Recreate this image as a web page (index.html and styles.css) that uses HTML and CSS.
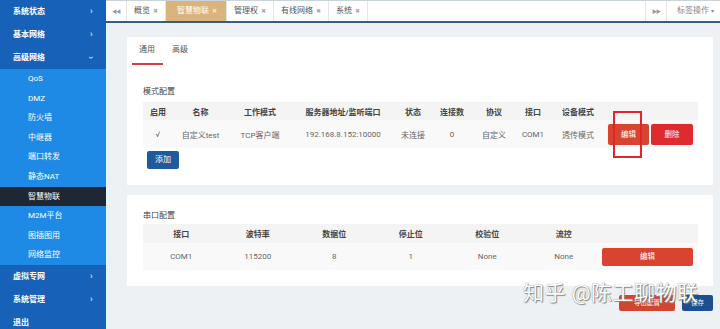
FILE: index.html
```html
<!DOCTYPE html>
<html>
<head>
<meta charset="utf-8" />
<title>智慧物联</title>
<link rel="stylesheet" href="styles.css">
</head>
<body>

<aside class="sidebar">
	<div class="nav-item">系统状态<span class="caret">&#8250;</span></div>
	<div class="nav-item">基本网络<span class="caret">&#8250;</span></div>
	<div class="nav-item">高级网络<span class="caret down">&#8250;</span></div>
	<ul class="sub">
		<li>QoS</li>
		<li>DMZ</li>
		<li>防火墙</li>
		<li>中继器</li>
		<li>端口转发</li>
		<li>静态NAT</li>
		<li class="active">智慧物联</li>
		<li>M2M平台</li>
		<li>图插图用</li>
		<li>网络监控</li>
	</ul>
	<div class="nav-item">虚拟专网<span class="caret">&#8250;</span></div>
	<div class="nav-item">系统管理<span class="caret">&#8250;</span></div>
	<div class="nav-item">退出</div>
</aside>

<div class="main">
	<div class="tabbar">
		<span class="tab-arrow">&#9664;&#9664;</span>
		<span class="tab">概览 <i>&#10006;</i></span>
		<span class="tab current">智慧物联 <i>&#10006;</i></span>
		<span class="tab">管理权 <i>&#10006;</i></span>
		<span class="tab">有线网络 <i>&#10006;</i></span>
		<span class="tab">系统 <i>&#10006;</i></span>
		<span class="tab-fill"></span>
		<span class="tab-arrow right">&#9654;&#9654;</span>
		<span class="tab-menu">标签操作 <b>&#9662;</b></span>
	</div>

	<div class="content">
		<div class="card first">
			<div class="subnav">
				<span class="on">通用</span>
				<span>高级</span>
			</div>
			<div class="section-title">模式配置</div>
			<table class="grid mode">
				<colgroup>
					<col style="width:30px"><col style="width:55px"><col style="width:64px">
					<col style="width:102px"><col style="width:38px"><col style="width:40px">
					<col style="width:44px"><col style="width:34px"><col style="width:56px">
					<col style="width:92px">
				</colgroup>
				<tr class="head">
					<th>启用</th><th>名称</th><th>工作模式</th><th>服务器地址/监听端口</th>
					<th>状态</th><th>连接数</th><th>协议</th><th>接口</th><th>设备模式</th><th></th>
				</tr>
				<tr class="row">
					<td>&#8730;</td><td>自定义test</td><td>TCP客户端</td><td>192.168.8.152:10000</td>
					<td>未连接</td><td>0</td><td>自定义</td><td>COM1</td><td>透传模式</td>
					<td class="ops">
						<span class="btn red">编辑</span><span class="btn crimson">删除</span>
						<span class="mark"></span>
					</td>
				</tr>
			</table>
			<span class="btn blue add">添加</span>
		</div>

		<div class="card second">
			<div class="section-title">串口配置</div>
			<table class="grid serial">
				<colgroup>
					<col style="width:76.5px"><col style="width:76.5px"><col style="width:76.5px">
					<col style="width:76.5px"><col style="width:76.5px"><col style="width:76.5px">
					<col style="width:96px">
				</colgroup>
				<tr class="head">
					<th>接口</th><th>波特率</th><th>数据位</th><th>停止位</th><th>校验位</th><th>流控</th><th></th>
				</tr>
				<tr class="row">
					<td>COM1</td><td>115200</td><td>8</td><td>1</td><td>None</td><td>None</td>
					<td class="ops"><span class="btn red wide">编辑</span></td>
				</tr>
			</table>
		</div>

		<div class="footer-btns">
			<span class="btn red export">导出配置</span>
			<span class="btn blue save">保存</span>
		</div>
	</div>
</div>

<div class="watermark">知乎 @陈工聊物联</div>

</body>
</html>
```

FILE: styles.css
```css
body {
	margin: 0;
	display: flex;
	height: 329px;
	overflow: hidden;
	font-family: Roboto, "Noto Sans CJK SC", sans-serif;
	font-size: 8px;
	color: #555;
	background: #eef1f3;
}

/* left menu */
.sidebar {
	width: 106px;
	flex: none;
	background: #1762b8;
	color: #fff;
}
.nav-item {
	height: 23px;
	line-height: 23px;
	padding-left: 13px;
	font-weight: bold;
	position: relative;
}
.caret {
	position: absolute;
	left: 90px;
	top: 0;
	font-size: 9px;
	color: #cfe0f5;
}
.caret.down {
	transform: rotate(90deg);
	left: 89px;
}
.sub {
	list-style: none;
	margin: 0;
	padding: 0;
	background: #1f8ae6;
}
.sub li {
	height: 19.6px;
	line-height: 19.6px;
	padding-left: 28px;
}
.sub li.active {
	background: #1e2733;
}

/* right side */
.main {
	flex: 1;
	display: flex;
	flex-direction: column;
	border-left: 3px solid #e6f6f8;
}
.tabbar {
	height: 20px;
	display: flex;
	align-items: stretch;
	background: #fff;
	border-top: 1px solid #c9d3d8;
	border-bottom: 2px solid #2f6180;
	line-height: 20px;
	color: #555;
	margin-left: -3px;
}
.tab-arrow {
	width: 20px;
	text-align: center;
	font-size: 5px;
	color: #999;
	border-right: 1px solid #e4e4e4;
	letter-spacing: -1px;
}
.tab-arrow.right {
	border-left: 1px solid #e4e4e4;
	border-right: 1px solid #e4e4e4;
}
.tab {
	padding: 0 7px;
	border-right: 1px solid #e4e4e4;
	white-space: nowrap;
}
.tab i {
	font-style: normal;
	font-size: 5.5px;
	color: #aaa;
	margin-left: 1px;
}
.tab.current {
	background: #dbb47b;
	color: #fff;
	padding: 0 9px 0 11px;
}
.tab.current i {
	color: #f3e3c8;
}
.tab-fill {
	flex: 1;
}
.tab-menu {
	padding-left: 10px;
	width: 43px;
	color: #888;
	white-space: nowrap;
}
.tab-menu b {
	font-weight: normal;
	font-size: 6px;
}

.content {
	flex: 1;
	padding: 14px 7px 0 18px;
	position: relative;
}
.card {
	background: #fff;
	padding: 0 15px 16px 16px;
}
.card.first {
	height: 148px;
	box-sizing: border-box;
}
.card.second {
	margin-top: 10px;
	height: 91px;
	box-sizing: border-box;
	padding-top: 16px;
}
.subnav {
	display: flex;
	gap: 2px;
	margin-left: -11px;
}
.subnav span {
	padding: 8px 7px;
	line-height: 10px;
	border-bottom: 2px solid transparent;
	color: #555;
}
.subnav span.on {
	border-bottom-color: #d8403a;
	padding: 8px 8px 8px 7px;
}
.section-title {
	line-height: 10px;
	color: #444;
	margin-top: 22px;
}
.card.second .section-title {
	margin-top: 0;
}

.grid {
	border-collapse: collapse;
	table-layout: fixed;
	width: 555px;
	margin-top: 5px;
	text-align: center;
}
.serial {
	margin-top: 3px;
}
.grid th {
	font-weight: bold;
	color: #444;
	height: 18px;
	padding: 0;
	background: #f4f4f4;
}
.serial th {
	height: 19px;
}
.grid td {
	height: 28px;
	padding: 0;
	background: #f9f9f9;
	color: #666;
}
.serial td {
	height: 27px;
}
.grid td.ops {
	text-align: left;
	padding-left: 2px;
	position: relative;
	white-space: nowrap;
}
.serial td.ops {
	padding-left: 0;
}

.btn {
	display: inline-block;
	height: 18px;
	line-height: 18px;
	text-align: center;
	color: #fff;
	border-radius: 2px;
	font-size: 7.5px;
}
.btn.red {
	background: #d8442f;
	width: 41px;
	height: 21px;
	line-height: 21px;
}
.btn.crimson {
	background: #e02a2b;
	width: 42px;
	height: 21px;
	line-height: 21px;
	margin-left: 2px;
}
.btn.red.wide {
	width: 91px;
	height: 18px;
	line-height: 18px;
}
.btn.blue {
	background: #1e5a9c;
	width: 32px;
}
.btn.add {
	margin: 3px 0 0 4px;
	font-size: 8px;
}
.mark {
	position: absolute;
	left: 7px;
	top: -9px;
	width: 25px;
	height: 43px;
	border: 2px solid #e0262b;
}

.footer-btns {
	display: flex;
	justify-content: flex-end;
	gap: 7px;
	margin-top: 9px;
}
.btn.export {
	width: 56px;
	height: 16px;
	line-height: 16px;
	background: #d2462f;
	font-size: 6.5px;
}
.btn.save {
	width: 31px;
	height: 16px;
	line-height: 16px;
	background: #1c4f8f;
	font-size: 6.5px;
}

.watermark {
	position: absolute;
	left: 523px;
	top: 281px;
	font-size: 21px;
	line-height: 24px;
	color: #fff;
	letter-spacing: 0.5px;
	text-shadow: 0 0 1px #777, 1px 1px 1px #888;
	white-space: nowrap;
}
```
